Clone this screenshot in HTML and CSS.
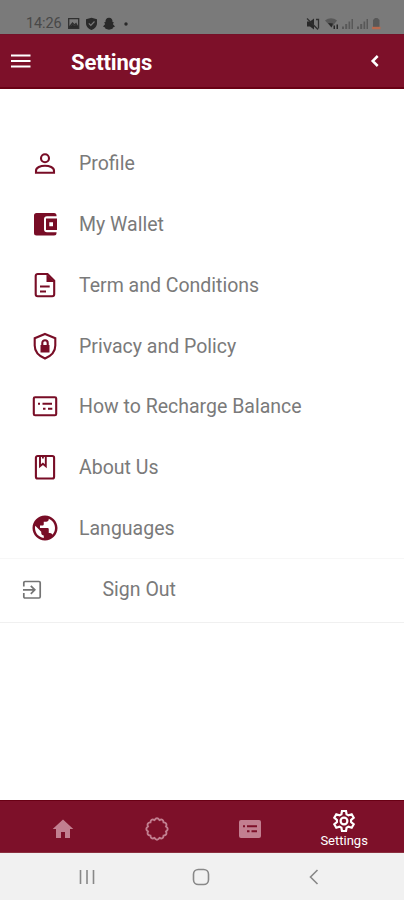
FILE: index.html
```
<!DOCTYPE html>
<html lang="en">
<head>
<meta charset="utf-8">
<title>Settings</title>
<link rel="stylesheet" href="styles.css">
</head>
<body>
<div class="screen">
  <div class="status">
    <span class="time">14:26</span>
    <svg class="notif" width="66" height="14" viewBox="0 0 66 14">
      <path class="sline" d="M1.700 1.700h10v9.600h-10zM2.500 10l3-4 2 2 1.500-1.500 2 3.500z"/>
      <path class="sfill" d="M3 10.500l2.500-3.500 2 2 1.500-1.500 2.500 3zM24.500.8l5.500 1.500v4c0 3.500-2.500 5.500-5.500 6.700-3-1.200-5.500-3.200-5.500-6.700v-4z"/>
      <path class="smark" d="M21.800 6.300l2 2 3.700-3.800"/>
      <path class="sfill" d="M42 .7c2.500 0 3.700 1.600 3.500 4.300l1.500.5-1.200 1.500 2.200 2.500-2 1-.5 1.200-3.500 1-3.500-1-.5-1.200-2-1 2.200-2.500L37 5.500l1.500-.5C38.300 2.300 39.500.7 42 .7z"/>
      <circle class="sfill" cx="59" cy="7" r="1.700"/>
    </svg>
    <svg class="signals" width="76" height="14" viewBox="0 0 76 14">
      <path class="sfill" d="M1 4.500h3l4-3v11l-4-3H1z"/>
      <path class="sline" d="M1 1.500l11 11M10 2.500h2.500v9"/>
      <path class="sdim" d="M19 3.500c4-3 8-3 12 0l-5.500 7z"/>
      <path class="sfill" d="M22 6l5 .5-1.500 4zM27.500 8.500h1.500v3.500h-1.500zM30.500 7.500H32V12h-1.500z"/>
      <path class="sdim" d="M36 9.500h2V12h-2zM39.200 7h2v5h-2zM42.500 4.500h1.700V12h-1.700zM45.500 2H47v10h-1.500zM51 9.500h2V12h-2zM54.200 7h2v5h-2zM57.500 4.500h1.700V12h-1.700zM60.500 2H62v10h-1.500z"/>
      <path class="sdim" d="M67 3l2-2h2.500l2 2v7H67z"/>
      <path class="batt" d="M66 9.800h8.500v2.400H66z"/>
    </svg>
  </div>

  <header class="appbar">
    <svg class="menu" width="20" height="14" viewBox="0 0 20 14"><path d="M0 1.500h19.500M0 7h19.500M0 12.500h19.500"/></svg>
    <h1>Settings</h1>
    <svg class="back" width="10" height="14" viewBox="0 0 10 14"><path d="M7.700 2L2.700 7l5 5"/></svg>
  </header>

  <main>
    <ul class="list">
      <li>
        <svg class="icon" viewBox="0 0 30 30"><circle class="l" cx="15" cy="10.200" r="4"/><path class="l" d="M6 24.700v-2c0-3.200 4.500-5 9-5s9 1.800 9 5v2z"/></svg>
        <span>Profile</span>
      </li>
      <li>
        <svg class="icon" viewBox="0 0 30 30"><path class="f" d="M6.500 4H24a2.500 2.500 0 0 1 2.500 2.500v.7H17a3 3 0 0 0-3 3v10a3 3 0 0 0 3 3h9.500v.8A2.500 2.500 0 0 1 24 26.500H6.500A2.500 2.500 0 0 1 4 24V6.500A2.500 2.500 0 0 1 6.500 4z"/><path class="f" fill-rule="evenodd" d="M16 9.500h11v11.500H16zM19.300 13.300v3.900h3.700v-3.900z"/></svg>
        <span>My Wallet</span>
      </li>
      <li>
        <svg class="icon" viewBox="0 0 30 30"><path class="l" d="M7.700 4h9.800l6.700 6.700v13.600a2 2 0 0 1-2 2H7.700a2 2 0 0 1-2-2V6a2 2 0 0 1 2-2z"/><path class="f" d="M16.500 4v8h8z"/><path class="l" d="M10 16.500h9.700M10 21.500h6"/></svg>
        <span>Term and Conditions</span>
      </li>
      <li>
        <svg class="icon" viewBox="0 0 30 30"><path class="l" d="M15 3l10.300 4.200v7.300c0 6-4.300 10.500-10.300 13-6-2.500-10.300-7-10.300-13V7.200z"/><path class="f" d="M10.500 14h9v7.500h-9z"/><path class="l" d="M12.300 14.500V12a2.700 2.700 0 0 1 5.400 0v2.500"/></svg>
        <span>Privacy and Policy</span>
      </li>
      <li>
        <svg class="icon" viewBox="0 0 30 30"><rect class="l" x="3.800" y="6.300" width="22.400" height="18" rx="1.300"/><path class="l" d="M8 12.700h2M12.500 12.700h9.500M13 17.700h2.500M18 17.700h4.300"/></svg>
        <span>How to Recharge Balance</span>
      </li>
      <li>
        <svg class="icon" viewBox="0 0 30 30"><rect class="l" x="5.900" y="4" width="18.200" height="22.500" rx="1.800"/><path class="l thin" d="M10 4v10.200l2.900-2.400 2.900 2.400V4M12.900 4v2.500"/></svg>
        <span>About Us</span>
      </li>
      <li>
        <svg class="icon" viewBox="0 0 24 24"><path class="f" d="M12 2C6.480 2 2 6.480 2 12s4.480 10 10 10 10-4.480 10-10S17.520 2 12 2zm-1 17.930c-3.950-.49-7-3.850-7-7.930 0-.62.08-1.210.21-1.790L9 15v1c0 1.100.9 2 2 2v1.930zm6.900-2.540c-.26-.81-1-1.390-1.900-1.390h-1v-3c0-.55-.45-1-1-1H8v-2h2c.55 0 1-.45 1-1V7h2c1.100 0 2-.9 2-2v-.41c2.930 1.190 5 4.060 5 7.410 0 2.080-.8 3.970-2.100 5.390z"/></svg>
        <span>Languages</span>
      </li>
    </ul>
    <div class="signout">
      <svg width="20" height="20" viewBox="0 0 20 20"><path d="M1.800 6.500V2.700A1.200 1.200 0 0 1 3 1.500h14a1.200 1.200 0 0 1 1.200 1.200v14.100A1.200 1.200 0 0 1 17 18H3a1.200 1.200 0 0 1-1.200-1.200V13M1 9.800h11.500M8.800 5.800l4 4-4 4"/></svg>
      <span>Sign Out</span>
    </div>
  </main>

  <nav class="tabs">
    <div class="tab"><svg width="22" height="24" viewBox="0 0 22 24"><path class="tf" d="M11 2.500L21.300 12H18v9h-5v-6H9v6H4v-9H.7z"/></svg></div>
    <div class="tab"><svg width="24" height="24" viewBox="-12 -12 24 24"><path class="tl" d="M8.980-2.410Q12.400 0 8.980 2.410Q10.740 6.200 6.580 6.580Q6.200 10.740 2.410 8.980Q0 12.400-2.410 8.980Q-6.200 10.740-6.580 6.580Q-10.740 6.200-8.980 2.410Q-12.400 0-8.980-2.410Q-10.740-6.200-6.580-6.580Q-6.200-10.740-2.410-8.980Q0-12.400 2.410-8.980Q6.200-10.740 6.580-6.580Q10.740-6.200 8.980-2.410z"/></svg></div>
    <div class="tab"><svg width="24" height="24" viewBox="0 0 24 24"><rect class="tf" x="1" y="3" width="22" height="18" rx="2"/><path class="cut" d="M5 9.300h2M9 9.300h10M9 14.200h2.500M13.500 14.200H19"/></svg></div>
    <div class="tab active">
      <svg width="24" height="24" viewBox="0 0 24 24"><path d="M10 2h4l.6 3.300 1.900 1.100 3.200-1.100 2 3.400-2.600 2.200v2.200l2.600 2.200-2 3.400-3.200-1.100-1.900 1.100L14 22h-4l-.6-3.300-1.900-1.100-3.200 1.100-2-3.400 2.600-2.200v-2.200L2.300 8.700l2-3.400 3.200 1.100 1.900-1.100z"/><circle cx="12" cy="12" r="3.400"/></svg>
      <span>Settings</span>
    </div>
  </nav>

  <div class="sysnav">
    <svg width="18" height="18" viewBox="0 0 18 18"><path d="M2.500 2v14M9 2v14M15.500 2v14"/></svg>
    <svg width="18" height="18" viewBox="0 0 18 18"><rect x="1.500" y="1.500" width="15" height="15" rx="4.800"/></svg>
    <svg width="18" height="18" viewBox="0 0 18 18"><path d="M12.500 2L5.500 9l7 7"/></svg>
  </div>
</div>
</body>
</html>
```
FILE: styles.css
```
* { box-sizing: border-box; }
body { margin: 0; background: #fff; font-family: Roboto, "Liberation Sans", sans-serif; }
svg { display: block; flex: none; }
.screen { width: 404px; height: 900px; display: flex; flex-direction: column; overflow: hidden; }

.status { height: 34px; background: #7a7a7a; display: flex; align-items: center; padding: 13px 22px 0 26px; color: #484848; }
.time { font-size: 14.500px; letter-spacing: -0.1px; width: 41px; }
.signals { margin-left: auto; }
.sfill { fill: #292929; }
.sline { fill: none; stroke: #303030; stroke-width: 1.300; }
.smark { fill: none; stroke: #7a7a7a; stroke-width: 1.200; }
.sdim { fill: #505050; opacity: .8; }
.batt { fill: #b8694d; }

.appbar { height: 55px; background: #7d1029; border-top: 1px solid #741128; border-bottom: 2px solid #690014; display: flex; align-items: center; padding: 0 24px 0 11px; color: #fff; }
.appbar path { fill: none; stroke: #fff; stroke-width: 2; }
.appbar .back path { stroke-width: 2.500; }
.appbar h1 { margin: 3px auto 0 40px; font-size: 22px; font-weight: 700; letter-spacing: -0.15px; line-height: 26px; }

main { flex: 1; padding-top: 44px; color: #7a7a7a; font-size: 19.500px; }
.list { list-style: none; margin: 0; padding: 0; }
.list li { height: 60.750px; display: flex; align-items: center; padding-left: 30px; gap: 19px; }
.list span { padding-top: 1px; }
.icon { width: 30px; height: 30px; }
.f { fill: #780d26; }
.l { fill: none; stroke: #780d26; stroke-width: 2.100; }
.thin { stroke-width: 1.900; }
.signout { height: 65px; border-top: 1px solid #f7f7f7; border-bottom: 1px solid #f0f0f0; display: flex; align-items: center; padding: 0 0 2px 22px; gap: 60.500px; }
.signout path { fill: none; stroke: #747474; stroke-width: 1.700; }

.tabs { height: 53px; background: #7d1029; border-top: 1px solid #690014; border-bottom: 1px solid #8b3040; display: flex; padding: 0 13px 0 16px; }
.tab { flex: 1; display: flex; flex-direction: column; align-items: center; justify-content: center; padding-top: 4px; }
.tf { fill: #c27f90; }
.tl { fill: none; stroke: #c27f90; stroke-width: 1.900; }
.cut { stroke: #7d1029; stroke-width: 1.900; }
.active { color: #fff; font-size: 13px; line-height: 15px; padding-top: 4px; }
.active path, .active circle { fill: none; stroke: #fff; stroke-width: 2.200; }

.sysnav { height: 47px; background: #f1f1f1; display: flex; justify-content: space-between; align-items: center; padding: 0 81px 0 78px; }
.sysnav path, .sysnav rect { fill: none; stroke: #888; stroke-width: 1.600; }
```
